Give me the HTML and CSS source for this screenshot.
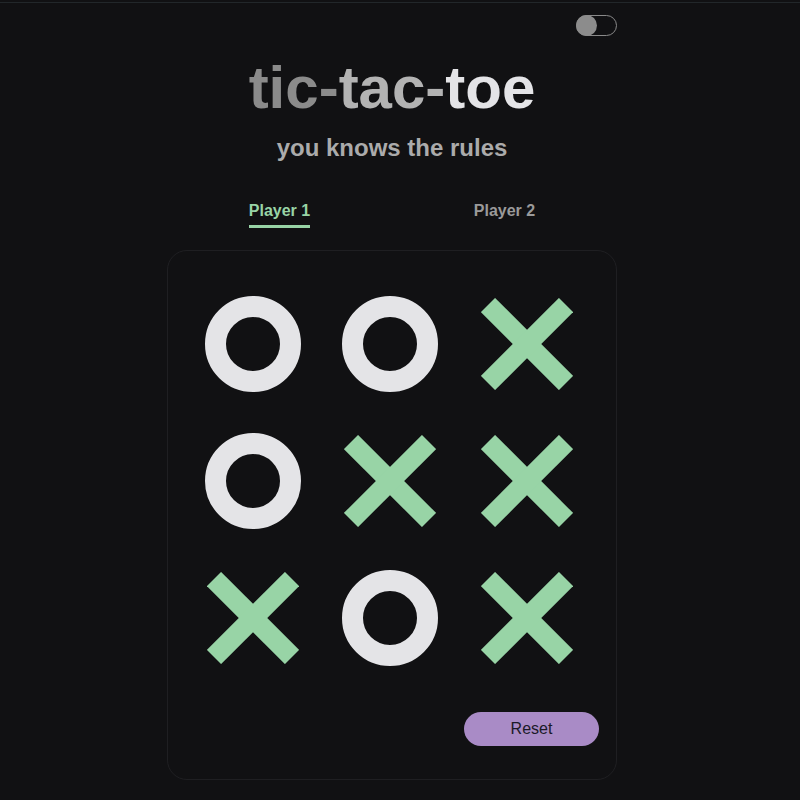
FILE: index.html
```html
<!DOCTYPE html>
<html lang="en">
<head>
<meta charset="utf-8">
<title>tic-tac-toe</title>
<link rel="stylesheet" href="styles.css">
</head>
<body>
<div class="topline"></div>
<main class="app">
  <div class="topbar">
    <button class="toggle" aria-label="Toggle theme"><span class="knob"></span></button>
  </div>
  <h1 class="title"><span class="t1">tic-</span><span class="t2">tac-</span><span class="t3">toe</span></h1>
  <p class="subtitle">you knows the rules</p>
  <div class="players">
    <div class="player"><span class="player-name active">Player 1</span></div>
    <div class="player"><span class="player-name">Player 2</span></div>
  </div>
  <section class="board-card">
    <div class="board">
      <div class="cell"><span class="o"></span></div>
      <div class="cell"><span class="o"></span></div>
      <div class="cell"><svg class="x" viewBox="0 0 92 92"><line x1="7" y1="7" x2="85" y2="85"/><line x1="85" y1="7" x2="7" y2="85"/></svg></div>
      <div class="cell"><span class="o"></span></div>
      <div class="cell"><svg class="x" viewBox="0 0 92 92"><line x1="7" y1="7" x2="85" y2="85"/><line x1="85" y1="7" x2="7" y2="85"/></svg></div>
      <div class="cell"><svg class="x" viewBox="0 0 92 92"><line x1="7" y1="7" x2="85" y2="85"/><line x1="85" y1="7" x2="7" y2="85"/></svg></div>
      <div class="cell"><svg class="x" viewBox="0 0 92 92"><line x1="7" y1="7" x2="85" y2="85"/><line x1="85" y1="7" x2="7" y2="85"/></svg></div>
      <div class="cell"><span class="o"></span></div>
      <div class="cell"><svg class="x" viewBox="0 0 92 92"><line x1="7" y1="7" x2="85" y2="85"/><line x1="85" y1="7" x2="7" y2="85"/></svg></div>
    </div>
    <div class="actions">
      <button class="reset">Reset</button>
    </div>
  </section>
</main>
</body>
</html>
```

FILE: styles.css
```css
* { box-sizing: border-box; }
html, body { margin: 0; padding: 0; }
body {
  background: #111113;
  font-family: "Liberation Sans", Arial, sans-serif;
  min-height: 800px;
}
.topline {
  margin-top: 2px;
  height: 1px;
  background: #22272a;
}
.app {
  width: 450px;
  margin-left: 167px;
  display: flex;
  flex-direction: column;
  align-items: stretch;
}
.topbar {
  display: flex;
  justify-content: flex-end;
  padding-top: 12px;
}
.toggle {
  width: 41px;
  height: 21px;
  border: 1.5px solid #8a8a8a;
  border-radius: 11px;
  background: #111113;
  padding: 0;
  display: flex;
  align-items: center;
  cursor: pointer;
}
.knob {
  width: 21px;
  height: 21px;
  border-radius: 50%;
  background: #8c8c8c;
  margin-left: -1.5px;
}
.title {
  margin: 20px 0 0;
  text-align: center;
  font-size: 60px;
  font-weight: 700;
  line-height: 64px;
  letter-spacing: 0;
}
.t1 { color: #8b8b8b; }
.t2 { color: #b3b3b3; }
.t3 { color: #e4e4e7; }
.subtitle {
  margin: 14px 0 0;
  text-align: center;
  font-size: 24px;
  font-weight: 700;
  color: #ababab;
  line-height: 28px;
}
.players {
  display: grid;
  grid-template-columns: 1fr 1fr;
  margin-top: 39px;
}
.player {
  display: flex;
  justify-content: center;
}
.player-name {
  font-size: 16px;
  font-weight: 700;
  color: #9a9a9a;
  padding-bottom: 4px;
  border-bottom: 3px solid transparent;
  line-height: 20px;
}
.player-name.active {
  color: #98d4a6;
  border-bottom-color: #98d4a6;
}
.board-card {
  margin-top: 22px;
  border: 1px solid #1f1f22;
  border-radius: 20px;
  padding: 24px 17px 33px 16px;
  display: flex;
  flex-direction: column;
}
.board {
  display: grid;
  grid-template-columns: repeat(3, 137px);
  grid-template-rows: repeat(3, 137px);
}
.cell {
  display: flex;
  align-items: center;
  justify-content: center;
}
.o {
  width: 96px;
  height: 96px;
  border-radius: 50%;
  border: 21px solid #e4e4e7;
}
.x {
  width: 92px;
  height: 92px;
}
.x line {
  stroke: #98d4a6;
  stroke-width: 20;
  stroke-linecap: butt;
}
.actions {
  display: flex;
  justify-content: flex-end;
  margin-top: 26px;
}
.reset {
  width: 135px;
  height: 34px;
  border: none;
  border-radius: 17px;
  background: #a98bc6;
  color: #1b1a28;
  font-family: "Liberation Sans", Arial, sans-serif;
  font-size: 16px;
  cursor: pointer;
}
```
